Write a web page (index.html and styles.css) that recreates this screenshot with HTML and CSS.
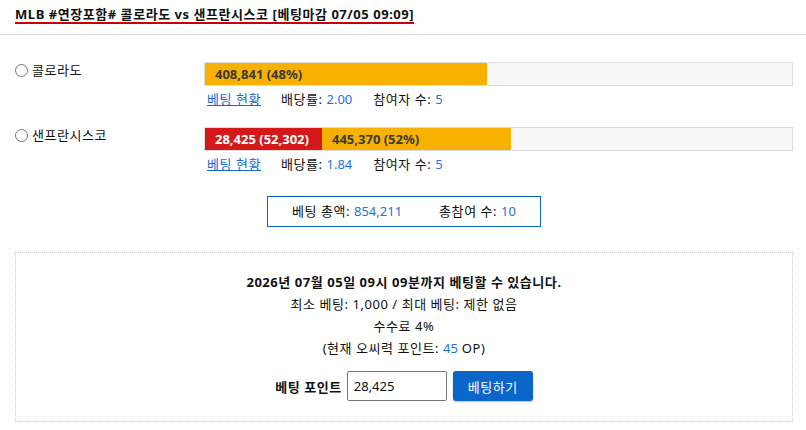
FILE: index.html
```html
<!DOCTYPE html>
<html lang="ko">
<head>
<meta charset="utf-8">
<title>MLB 베팅</title>
<link rel="stylesheet" href="styles.css">
</head>
<body>
<div class="header">
  <span class="title">MLB #연장포함# 콜로라도 vs 샌프란시스코 [베팅마감 07/05 09:09]</span>
</div>
<div class="main">
  <div class="team-row">
    <label class="team-label"><input type="radio" name="team" class="radio"> 콜로라도</label>
    <div class="team-info">
      <div class="bar">
        <div class="seg seg-orange" style="width:282px">408,841 (48%)</div>
      </div>
      <div class="meta">
        <a href="#" class="link">베팅 현황</a>
        <span class="meta-item">배당률: <span class="num">2.00</span></span>
        <span class="meta-item">참여자 수: <span class="num">5</span></span>
      </div>
    </div>
  </div>
  <div class="team-row">
    <label class="team-label"><input type="radio" name="team" class="radio"> 샌프란시스코</label>
    <div class="team-info">
      <div class="bar">
        <div class="seg seg-red" style="width:117px">28,425 (52,302)</div>
        <div class="seg seg-orange" style="width:189px">445,370 (52%)</div>
      </div>
      <div class="meta">
        <a href="#" class="link">베팅 현황</a>
        <span class="meta-item">배당률: <span class="num">1.84</span></span>
        <span class="meta-item">참여자 수: <span class="num">5</span></span>
      </div>
    </div>
  </div>
  <div class="totals-wrap">
    <div class="totals">
      <span>베팅 총액: <span class="num">854,211</span></span>
      <span>총참여 수: <span class="num">10</span></span>
    </div>
  </div>
  <div class="bet-box">
    <p class="deadline">2026년 07월 05일 09시 09분까지 베팅할 수 있습니다.</p>
    <p class="line">최소 베팅: 1,000 / 최대 베팅: 제한 없음</p>
    <p class="line">수수료 4%</p>
    <p class="line">(현재 오씨력 포인트: <span class="num">45</span> OP)</p>
    <div class="bet-form">
      <span class="form-label">베팅 포인트</span>
      <input type="text" class="point-input" value="28,425">
      <button type="button" class="bet-btn">베팅하기</button>
    </div>
  </div>
</div>
</body>
</html>
```
FILE: styles.css
```css
* { box-sizing: border-box; }
body {
  margin: 0;
  font-family: "Noto Sans", "Noto Sans CJK KR", sans-serif;
  font-size: 13px;
  letter-spacing: 0.55px;
  color: #111;
  background: #fff;
}
.header {
  height: 35px;
  padding: 5px 15px 0;
  border-bottom: 1px solid #ddd;
}
.title {
  display: inline-block;
  font-weight: bold;
  line-height: 16px;
  border-bottom: 2px solid #c8000a;
}
.main {
  padding: 27px 13px 0 15px;
}
.team-row {
  display: flex;
  margin-bottom: 19px;
}
.team-label {
  width: 189px;
  display: flex;
  align-items: center;
  height: 14px;
  margin-top: 1px;
  line-height: 14px;
}
.radio {
  width: 13px;
  height: 13px;
  margin: 0 4px 0 0;
}
.team-info {
  flex: 1;
}
.bar {
  display: flex;
  height: 24px;
  border: 1px solid #ddd;
  background: #f8f8f8;
}
.seg {
  height: 22px;
  line-height: 22px;
  padding-left: 10px;
  font-weight: bold;
  letter-spacing: 0;
  white-space: nowrap;
  overflow: hidden;
}
.seg-orange { background: #f9b100; color: #3a3a3a; }
.seg-red { background: #d5191b; color: #fff; }
.meta {
  display: flex;
  margin-top: 4px;
  line-height: 18px;
  padding-left: 3px;
}
.link {
  color: #1668d4;
  text-decoration: underline;
  margin-right: 20px;
}
.meta-item { margin-right: 21px; }
.num { color: #1f72dc; letter-spacing: 0; }
.totals-wrap {
  display: flex;
  justify-content: center;
  margin-top: 23px;
}
.totals {
  display: flex;
  gap: 37px;
  border: 1px solid #0a66c8;
  height: 31px;
  line-height: 29px;
  padding: 0 24px 0 24px;
}
.bet-box {
  margin-top: 25px;
  border: 1px dotted #ccc;
  padding: 18px 0 20px;
  text-align: center;
}
.bet-box p {
  margin: 0;
  line-height: 22px;
}
.deadline { font-weight: bold; }
.bet-form {
  display: flex;
  justify-content: center;
  align-items: center;
  margin-top: 12px;
}
.form-label {
  font-weight: bold;
  margin-right: 5px;
}
.point-input {
  width: 100px;
  height: 30px;
  border: 1px solid #767676;
  border-radius: 2px;
  padding: 0 6px;
  font: inherit;
  letter-spacing: 0;
  color: #111;
  margin: 0 6px 0 0;
}
.bet-btn {
  width: 80px;
  height: 30px;
  border: none;
  border-radius: 3px;
  background: #0a66c8;
  color: #fff;
  font: inherit;
  letter-spacing: 0.55px;
  box-shadow: 0 1px 2px rgba(0,0,0,0.25);
  cursor: pointer;
}
```
